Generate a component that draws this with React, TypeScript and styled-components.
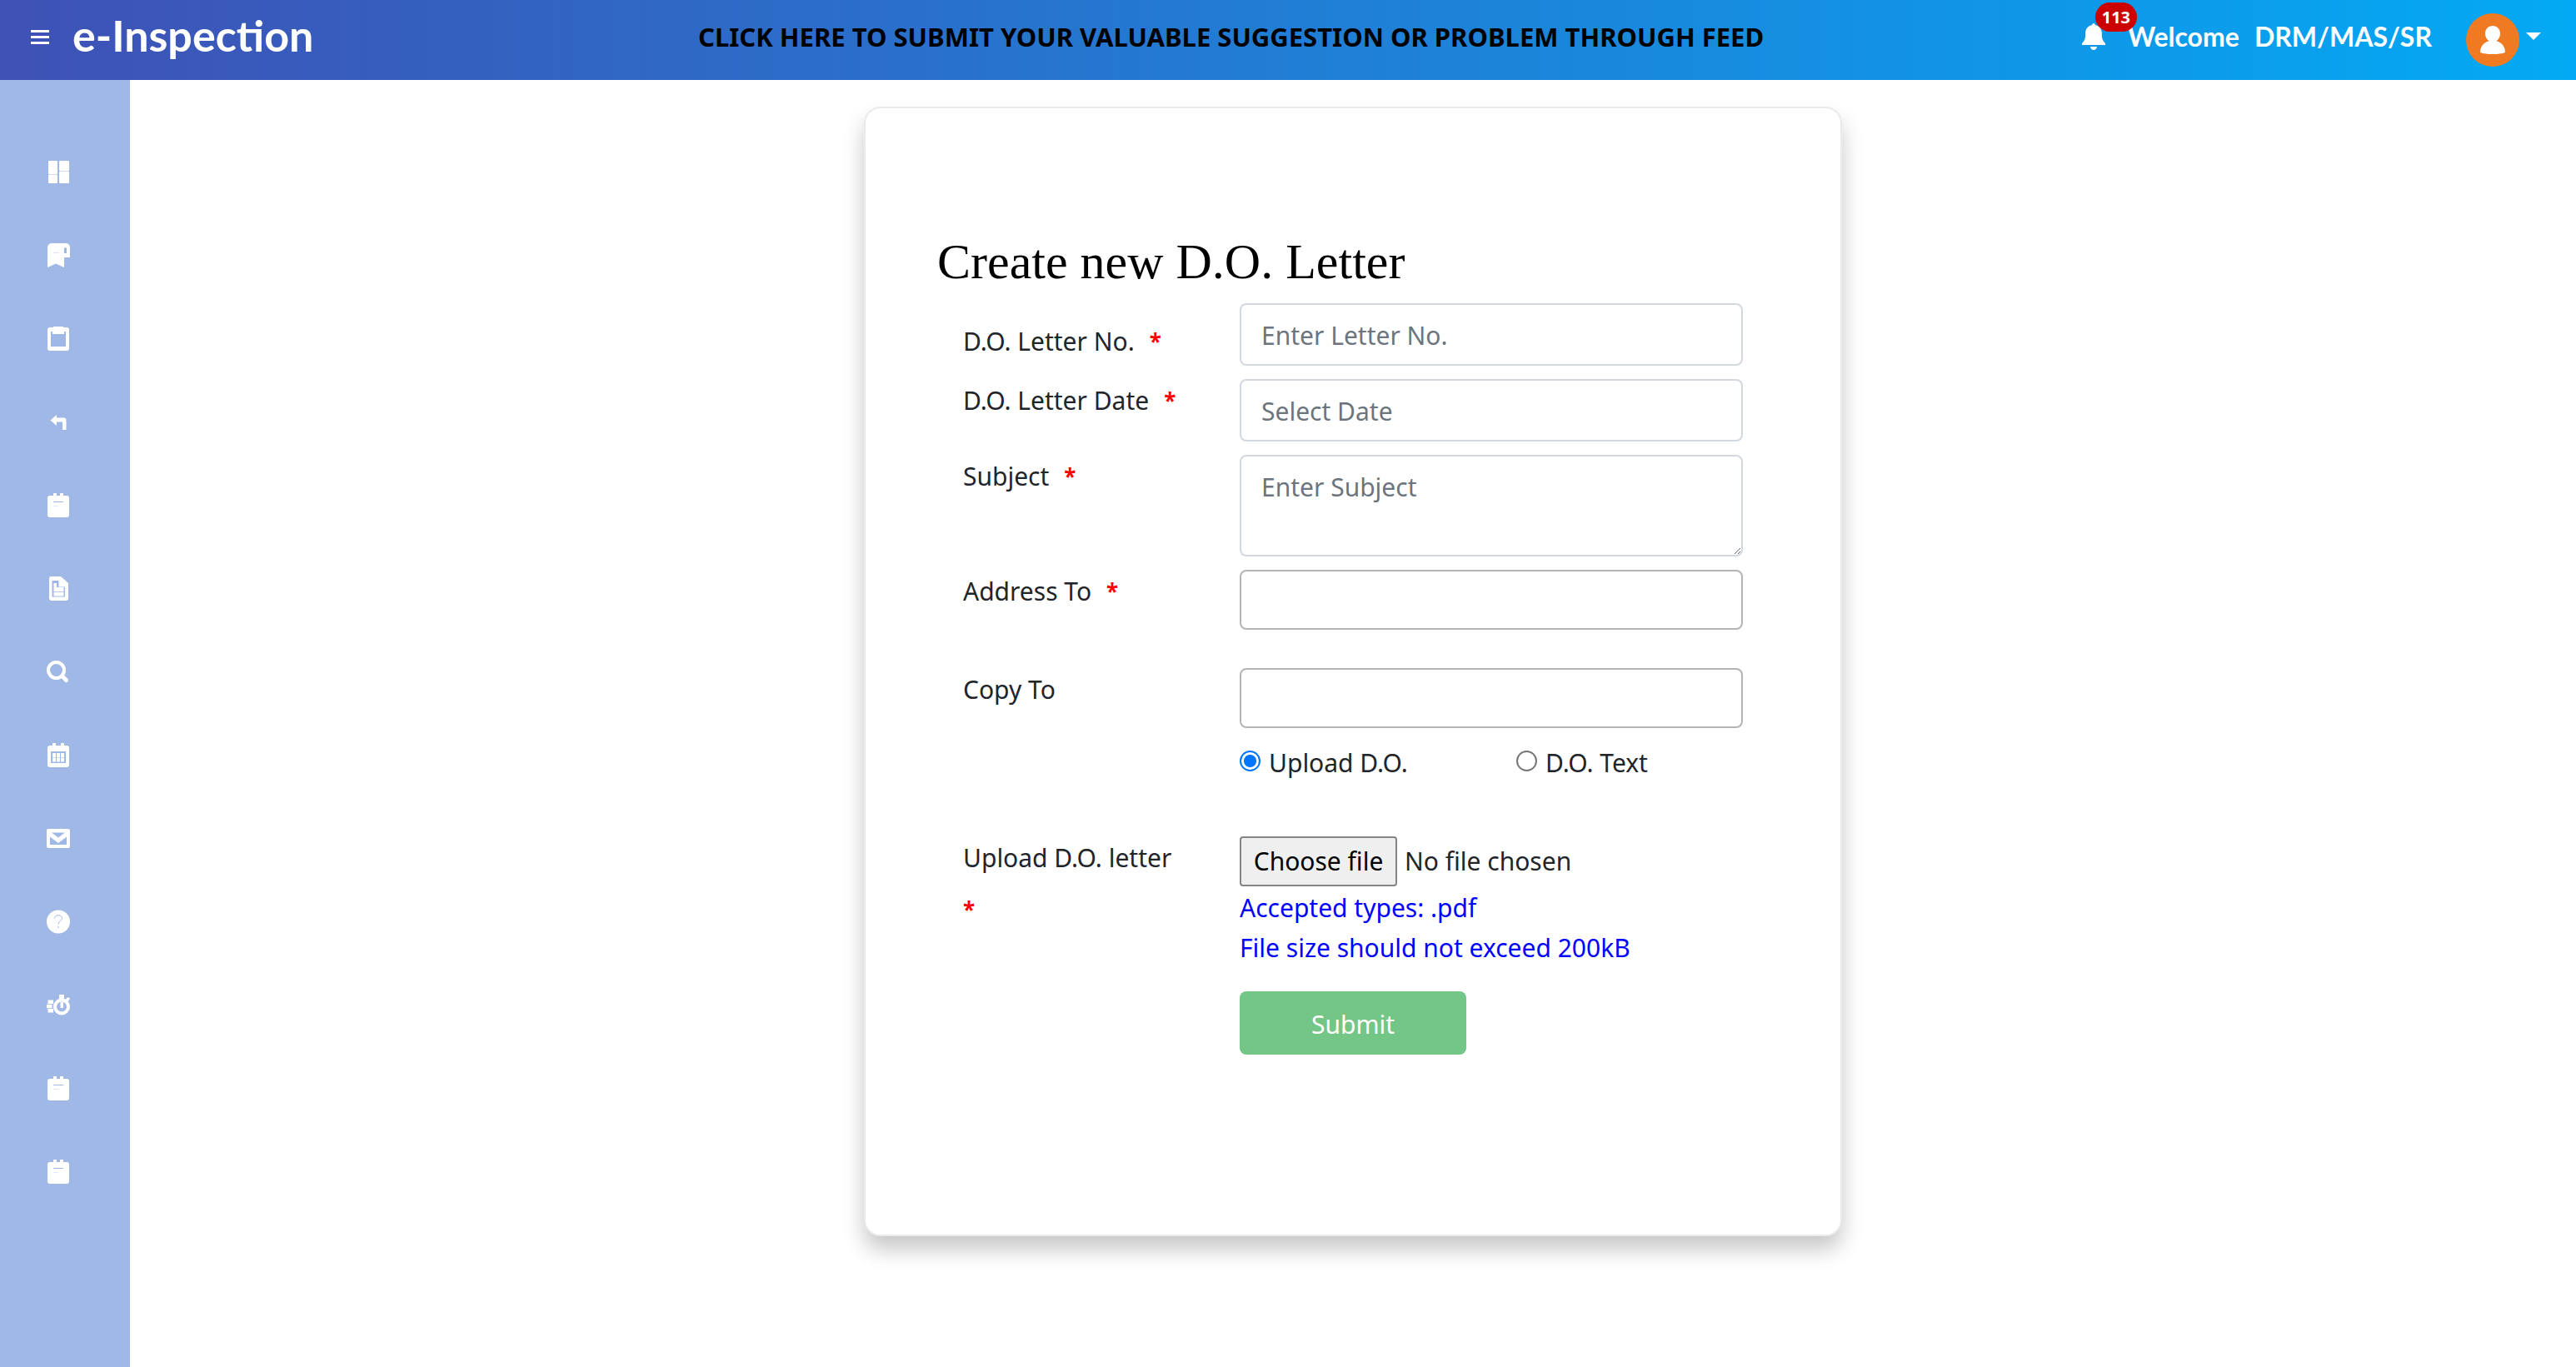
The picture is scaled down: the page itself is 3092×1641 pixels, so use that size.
import React from "react";
import styled, { createGlobalStyle } from "styled-components";

const Global = createGlobalStyle`
  *, *::before, *::after { box-sizing: border-box; }
  body {
    margin: 0; background: #fff; color: #212529;
    font-family: "Noto Sans", "Open Sans", sans-serif; font-size: 30px; line-height: 48px;
  }
  button, input, textarea { font: inherit; color: inherit; }
`;

const Page = styled.div`
  display: flex;
  flex-direction: column;
  min-height: 100vh;
`;

const Header = styled.header`
  display: flex;
  align-items: center;
  height: 96px;
  padding: 0 42px 0 37px;
  background: linear-gradient(to right, #3f51b5, #03a9f4);
  color: #fff;
`;

const IconButton = styled.button`
  display: flex;
  align-items: center;
  padding: 0;
  border: 0;
  background: none;
  color: #fff;
  cursor: pointer;
`;

const Brand = styled.a`
  width: 290px;
  padding-bottom: 12px;
  margin-left: 28px;
  color: #fff;
  text-decoration: none;
  white-space: nowrap;
  font: 700 52px/60px Lato, sans-serif;
`;

const Ticker = styled.a`
  flex: 0 1 1284px;
  margin: 0 auto 0 461px;
  padding-bottom: 8px;
  overflow: hidden;
  white-space: nowrap;
  color: #000;
  text-decoration: none;
  font-weight: 700;
  font-size: 31px;
`;

const Alerts = styled(IconButton)`
  position: relative;
`;

const Badge = styled.span`
  position: absolute;
  left: 16px;
  top: -25px;
  padding: 0 8px;
  border-radius: 18px;
  background: #c00;
  font: 700 20px/35px "Noto Sans", sans-serif;
`;

const Welcome = styled.div`
  display: flex;
  gap: 18px;
  margin: 0 41px 0 27px;
  padding-bottom: 8px;
  white-space: nowrap;
  font: 700 32px/40px Lato, sans-serif;
`;

const Account = styled(IconButton)`
  gap: 8px;
`;

const Body = styled.div`
  display: flex;
  flex: 1;
`;

const Sidebar = styled.nav`
  flex: none;
  width: 156px;
  padding-top: 60px;
  background: #a0b8e6;
`;

const SideLink = styled.a`
  display: flex;
  align-items: center;
  height: 100px;
  padding-left: 56px;
  color: #fff;
`;

const Main = styled.main`
  display: flex;
  flex: 1;
  justify-content: center;
  align-items: flex-start;
  padding: 32px 24px 64px;
`;

const Card = styled.form`
  width: 1174px;
  padding: 152px 86px 216px;
  border: 2px solid #ebebeb;
  border-radius: 20px;
  background: #fff;
  box-shadow: 0 16px 26px rgba(0, 0, 0, 0.22);
`;

const Title = styled.h1`
  margin: 0 0 18px;
  color: #000;
  font: 400 60px/64px "Liberation Serif", serif;
`;

const Row = styled.div<{ $gap?: number }>`
  display: grid;
  grid-template-columns: 332px 604px;
  padding-left: 31px;
  margin-bottom: ${(p) => p.$gap ?? 16}px;
`;

const Label = styled.label<{ $top?: number }>`
  display: flex;
  flex-wrap: wrap;
  align-content: flex-start;
  gap: 14px 18px;
  padding: ${(p) => p.$top ?? 2}px 58px 0 0;
`;

const Star = styled.span`
  color: #f00;
  font-weight: 700;
  font-size: 26px;
`;

const Input = styled.input`
  height: 75px;
  padding: 5px 24px 3px;
  border: 2px solid #d3d8de;
  border-radius: 8px;
  background: #fff;
  &::placeholder { color: #6c757d; opacity: 1; }
`;

const Picker = styled(Input)`
  height: 72px;
  border-color: #b4b4b4;
`;

const Area = styled.textarea`
  height: 122px;
  padding: 13px 24px;
  border: 2px solid #d3d8de;
  border-radius: 8px;
  resize: vertical;
  &::placeholder { color: #6c757d; opacity: 1; }
`;

const Field = styled.div`
  grid-column: 2;
`;

const Choices = styled(Field)`
  display: grid;
  grid-template-columns: 332px 1fr;
`;

const Choice = styled.label`
  display: flex;
  align-items: center;
  gap: 10px;
`;

const Radio = styled.input`
  appearance: none;
  width: 25px;
  height: 25px;
  margin: 0 0 6px;
  border: 2px solid #767676;
  border-radius: 50%;
  background: #fff;
  &:checked {
    border-color: #0075ff;
    background: radial-gradient(circle, #0075ff 7px, #fff 8px);
  }
`;

const FilePicker = styled.div`
  display: flex;
  align-items: center;
  gap: 9px;
  margin-bottom: 2px;
`;

const HiddenFile = styled.input`
  position: absolute;
  width: 1px;
  height: 1px;
  opacity: 0;
`;

const FileButton = styled.label`
  width: 189px;
  border: 2px solid #858585;
  border-radius: 4px;
  background: #efefef;
  color: #000;
  text-align: center;
  line-height: 56px;
  cursor: pointer;
`;

const Hint = styled.p`
  margin: 0;
  color: #00f;
`;

const Submit = styled.button`
  justify-self: start;
  grid-column: 2;
  width: 272px;
  height: 76px;
  padding: 4px 0 0;
  border: 0;
  border-radius: 8px;
  background: #74c687;
  color: #fff;
`;

const Note = () => (
  <>
    <path fill="currentColor" d="M4 3h4V0h4v3h4V0h4v3h4a3 3 0 0 1 3 3v20a3 3 0 0 1-3 3H4a3 3 0 0 1-3-3V6a3 3 0 0 1 3-3z" />
    <path stroke="#a0b8e6" d="M8 10.500h12" />
    <path stroke="#dfe8f7" d="M8 15.500h6" />
  </>
);

const icons: { name: string; art: React.ReactNode }[] = [
  {
    name: "Dashboard",
    art: (
      <g fill="currentColor">
        <rect x="2" y="1" width="11" height="16" rx="1" />
        <rect x="2" y="17.500" width="11" height="10.500" rx="1" />
        <rect x="15" y="1" width="12" height="12" rx="1" />
        <rect x="15" y="13.500" width="12" height="14.500" rx="1" />
      </g>
    ),
  },
  {
    name: "Bookmarks",
    art: (
      <>
        <path fill="currentColor" fillRule="evenodd" d="M6 0h17a5 5 0 0 1 5 5v12h-7v12l-10-4.500L1 29V5a5 5 0 0 1 5-5zM21 12h3V6.500a1.500 1.500 0 0 0-3 0z" />
        <path stroke="#dfe3f7" d="M8 11.500h7" />
      </>
    ),
  },
  {
    name: "Clipboard",
    art: <path fill="currentColor" fillRule="evenodd" d="M8 0h12v1h4a3 3 0 0 1 3 3v22a3 3 0 0 1-3 3H4a3 3 0 0 1-3-3V4a3 3 0 0 1 3-3h4zM5 6v18h18V6h-2v3H7V6z" />,
  },
  {
    name: "Replies",
    art: <path fill="currentColor" d="M4.500 12.500 12 6v3.500h8.500a3 3 0 0 1 3 3V24H19v-9.500h-7V19z" />,
  },
  { name: "Notes", art: <Note /> },
  {
    name: "Reports",
    art: (
      <>
        <path fill="currentColor" fillRule="evenodd" d="M5 0h12l9 8v18a3 3 0 0 1-3 3H6a3 3 0 0 1-3-3V2a2 2 0 0 1 2-2zM6.500 5v19.500h15.500V12.500h-7.500V5z" />
        <path fill="currentColor" d="M8.500 8h3.500v5h8.500v5H8.500zM8.500 18.700h12V23.500H8.500z" />
      </>
    ),
  },
  {
    name: "Search",
    art: (
      <g fill="none" stroke="currentColor">
        <circle cx="11.500" cy="12.500" r="9.500" strokeWidth="4" />
        <path d="m18.500 19.500 5 5" strokeWidth="5" strokeLinecap="round" />
      </g>
    ),
  },
  {
    name: "Calendar",
    art: (
      <>
        <path fill="currentColor" fillRule="evenodd" d="M4 3h3V0h4v3h6V0h4v3h3a3 3 0 0 1 3 3v20a3 3 0 0 1-3 3H4a3 3 0 0 1-3-3V6a3 3 0 0 1 3-3zM5 10v14h18V10z" />
        <path fill="currentColor" d="M7 12h4v5H7zM12 12h4v5h-4zM17 12h4v5h-4zM7 17.500h4v5H7zM12 17.500h4v5h-4zM17 17.500h4v5h-4z" />
      </>
    ),
  },
  {
    name: "Messages",
    art: <path fill="currentColor" fillRule="evenodd" d="M2 3h24a2 2 0 0 1 2 2v19a2 2 0 0 1-2 2H2a2 2 0 0 1-2-2V5a2 2 0 0 1 2-2zM6 7.500l8 6 8-6zM4 12.500V22h20V12.500l-10 7.500z" />,
  },
  {
    name: "Help",
    art: (
      <>
        <circle cx="14" cy="14.500" r="14" fill="currentColor" />
        <path fill="none" stroke="#a0b8e6" strokeWidth="1" d="M9.500 10.500c0-5 9-5 9 0 0 3-4.500 3-4.500 7M14 20v2" />
      </>
    ),
  },
  {
    name: "Timing",
    art: (
      <>
        <circle cx="18" cy="16.500" r="8" fill="none" stroke="currentColor" strokeWidth="4" />
        <path fill="currentColor" d="M15 2h6v6h-6zM22 8l4-3 2 2-3 4zM16.500 11h3.500v7h-3.500zM1.500 8.500H8v4.500H1.500zM0 13.800h6.500v4.400H0zM1.500 19H8v4.500H1.500z" />
      </>
    ),
  },
  { name: "Inspection notes", art: <Note /> },
  { name: "Letters", art: <Note /> },
];

export default function App() {
  return (
    <>
      <Global />
      <Page>
        <Header>
          <IconButton type="button" aria-label="Toggle menu">
            <svg width="22" height="24" viewBox="0 0 22 24" fill="currentColor" aria-hidden="true">
              <path d="M0 0h22v3H0zM0 7h22v3H0zM0 14h22v3H0z" />
            </svg>
          </IconButton>
          <Brand href="#">e-Inspection</Brand>
          <Ticker href="#">CLICK HERE TO SUBMIT YOUR VALUABLE SUGGESTION OR PROBLEM THROUGH FEED</Ticker>
          <Alerts type="button" aria-label="113 notifications">
            <svg width="28" height="40" viewBox="0 0 28 40" fill="currentColor" aria-hidden="true">
              <path d="M14 0c1.200 0 1.800 1 1.800 2 5 1 8 4.500 8 10 0 6 .700 8.500 4.200 12v2H0v-2c3.500-3.500 4.200-6 4.200-12 0-5.500 3-9 8-10 0-1 .600-2 1.800-2zM10 28h8c-.300 2.500-2 4-4 4s-3.700-1.500-4-4z" />
            </svg>
            <Badge>113</Badge>
          </Alerts>
          <Welcome>
            <span>Welcome</span>
            <span>DRM/MAS/SR</span>
          </Welcome>
          <Account type="button" aria-label="Account menu">
            <svg width="64" height="64" viewBox="0 0 64 64" aria-hidden="true">
              <circle cx="32" cy="32" r="32" fill="#f07a21" />
              <path fill="#fff" d="M32 15c5.500 0 9 4 9 9 0 4-1.800 7.500-4.500 9.200C43 35 47 40 47 47c-4 1.500-9 2-15 2s-11-.500-15-2c0-7 4-12 10.500-13.800C24.800 31.500 23 28 23 24c0-5 3.500-9 9-9z" />
            </svg>
            <svg width="18" height="18" viewBox="0 0 18 18" fill="currentColor" aria-hidden="true">
              <path d="M0 0h18L9 9z" />
            </svg>
          </Account>
        </Header>
        <Body>
          <Sidebar aria-label="Main">
            {icons.map((icon) => (
              <SideLink key={icon.name} href="#" aria-label={icon.name}>
                <svg width="28" height="29" viewBox="0 0 28 29" aria-hidden="true">
                  {icon.art}
                </svg>
              </SideLink>
            ))}
          </Sidebar>
          <Main>
            <Card>
              <Title>Create new D.O. Letter</Title>
              <Row>
                <Label $top={22} htmlFor="number">D.O. Letter No. <Star>*</Star></Label>
                <Input id="number" placeholder="Enter Letter No." />
              </Row>
              <Row>
                <Label htmlFor="date">D.O. Letter Date <Star>*</Star></Label>
                <Input id="date" placeholder="Select Date" />
              </Row>
              <Row>
                <Label htmlFor="subject">Subject <Star>*</Star></Label>
                <Area id="subject" placeholder="Enter Subject" />
              </Row>
              <Row $gap={46}>
                <Label htmlFor="address">Address To <Star>*</Star></Label>
                <Picker id="address" />
              </Row>
              <Row $gap={18}>
                <Label htmlFor="copy">Copy To</Label>
                <Picker id="copy" />
              </Row>
              <Row $gap={64}>
                <Choices role="radiogroup" aria-label="Letter source">
                  <Choice><Radio type="radio" name="source" defaultChecked />Upload D.O.</Choice>
                  <Choice><Radio type="radio" name="source" />D.O. Text</Choice>
                </Choices>
              </Row>
              <Row $gap={28}>
                <Label htmlFor="file">Upload D.O. letter <Star>*</Star></Label>
                <Field>
                  <FilePicker>
                    <HiddenFile id="file" type="file" accept=".pdf" />
                    <FileButton htmlFor="file">Choose file</FileButton>
                    <span>No file chosen</span>
                  </FilePicker>
                  <Hint>Accepted types: .pdf</Hint>
                  <Hint>File size should not exceed 200kB</Hint>
                </Field>
              </Row>
              <Row $gap={0}>
                <Submit type="button">Submit</Submit>
              </Row>
            </Card>
          </Main>
        </Body>
      </Page>
    </>
  );
}
